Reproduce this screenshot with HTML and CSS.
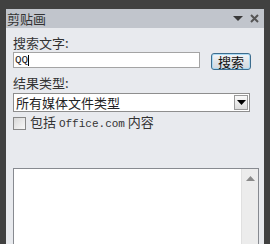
FILE: index.html
```html
<!DOCTYPE html>
<html>
<head>
    <title>剪贴画</title>
    <link rel="stylesheet" href="styles.css">
</head>
<body>
    <div class="panel">
        <div class="titlebar">
            <span class="title">剪贴画</span>
            <span class="tools">
                <svg width="10" height="6" viewBox="0 0 10 6"><path d="M0 0 H10 L5 5 Z" fill="#3a3a3a"/></svg>
                <svg width="9" height="9" viewBox="0 0 9 9"><path d="M1 1 L8 8 M8 1 L1 8" stroke="#555" stroke-width="2"/></svg>
            </span>
        </div>
        <div class="content">
            <div class="label">搜索文字:</div>
            <div class="searchRow">
                <div class="textbox">QQ<span class="caret"></span></div>
                <button class="searchBtn">搜索</button>
            </div>
            <div class="label second">结果类型:</div>
            <div class="select">
                <span class="selectText">所有媒体文件类型</span>
                <span class="selectArrow">
                    <svg width="9" height="5" viewBox="0 0 9 5"><path d="M0 0 H9 L4.5 5 Z" fill="#000"/></svg>
                </span>
            </div>
            <div class="checkRow">
                <span class="checkbox"></span>
                <span>包括 <span class="mono">Office.com</span> 内容</span>
            </div>
            <div class="results">
                <div class="scrollbar">
                    <svg width="9" height="5" viewBox="0 0 9 5"><path d="M0 5 H9 L4.5 0 Z" fill="#8a8a8a"/></svg>
                </div>
            </div>
        </div>
    </div>
</body>
</html>
```

FILE: styles.css
```css
body {
    margin: 0;
    background-color: #414141;
    font-family: "Noto Sans CJK SC", "DejaVu Sans", sans-serif;
    font-size: 13px;
    color: #222;
    overflow: hidden;
}
.panel {
    margin: 9px 0 0 6px;
    width: 258px;
    height: 235px;
    overflow: hidden;
    background-color: #e8eaee;
}
.titlebar {
    height: 19px;
    background-color: #c1c5cc;
    display: flex;
    align-items: center;
    justify-content: space-between;
    padding: 0 5px 0 1px;
}
.title {
    color: #333;
    line-height: 19px;
}
.tools {
    display: flex;
    align-items: center;
    gap: 7px;
}
.content {
    padding: 7px 0 0 7px;
}
.label {
    line-height: 16px;
    height: 16px;
    color: #333;
}
.label.second {
    margin-top: 5px;
}
.searchRow {
    display: flex;
    align-items: flex-start;
    margin-top: 1px;
}
.textbox {
    width: 184px;
    height: 14px;
    border: 1px solid #a4a4a4;
    background-color: #fff;
    font-family: "Liberation Mono", monospace;
    font-size: 11px;
    line-height: 14px;
    padding-left: 1px;
    display: flex;
    align-items: center;
}
.caret {
    display: inline-block;
    width: 1px;
    height: 11px;
    background-color: #000;
}
.searchBtn {
    margin: 1px 0 0 11px;
    width: 40px;
    height: 17px;
    padding: 0;
    border: 1px solid #3d6d8e;
    border-radius: 3px;
    background: linear-gradient(#f4f6f8, #e0e4e8 50%, #d3d8de);
    box-shadow: inset 0 0 0 1px #a9d9f3;
    font-family: "Noto Sans CJK SC", sans-serif;
    font-size: 13px;
    line-height: 14px;
    color: #111;
}
.select {
    margin-top: 2px;
    width: 235px;
    height: 17px;
    border: 1px solid #8e8e8e;
    background-color: #fff;
    display: flex;
    justify-content: space-between;
}
.selectText {
    padding-left: 2px;
    line-height: 17px;
}
.selectArrow {
    width: 14px;
    height: 15px;
    margin: 1px;
    border: 1px solid #9a9a9a;
    box-sizing: border-box;
    background: linear-gradient(#fafafa, #dcdcdc);
    display: flex;
    align-items: center;
    justify-content: center;
}
.checkRow {
    margin-top: 4px;
    display: flex;
    align-items: center;
    gap: 4px;
    height: 14px;
    line-height: 14px;
    color: #333;
}
.checkbox {
    width: 11px;
    height: 11px;
    border: 1px solid #888;
    background: linear-gradient(135deg, #d8d8d8, #f8f8f8);
}
.mono {
    font-family: "Liberation Mono", monospace;
    font-size: 11px;
}
.results {
    margin-top: 38px;
    width: 244px;
    height: 80px;
    border: 1px solid #878a90;
    background-color: #fff;
    display: flex;
    justify-content: flex-end;
}
.scrollbar {
    width: 16px;
    background-color: #ececec;
    border-left: 1px solid #e0e0e0;
    display: flex;
    justify-content: center;
    padding-top: 7px;
}
```
